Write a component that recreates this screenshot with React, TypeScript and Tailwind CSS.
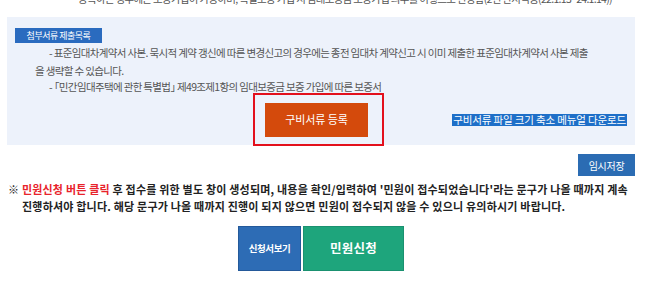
export default function App() {
  return (
    <div className="w-[650px] h-[287px] overflow-hidden bg-white font-['Noto_Sans_CJK_KR','Noto_Sans',sans-serif] text-[#333]">
      {/* cut-off line from the section above */}
      <div className="h-[17px] overflow-hidden">
        <p className="-mt-[7px] pl-[78px] whitespace-nowrap text-[10.5px] leading-[12px] tracking-[-0.7px] text-[#555]">
          등록하는 경우에는 보증가입이 가능하며, 특별보증 가입 시 임대보증금 보증가입 의무를 이행으로 인정함(2년 한시적용(22.1.13~24.1.14))
        </p>
      </div>

      {/* attachment panel */}
      <section className="ml-[7px] w-[628px] h-[128px] bg-[#edf2fb] pt-[11px] pl-[8px] pr-[8px]">
        <div className="w-[87px] h-[15px] bg-[#2a6bbf] text-white text-[9px] leading-[15px] tracking-[-0.5px] text-center">
          첨부서류 제출목록
        </div>
        <ul className="mt-[1px] pl-[27px] text-[10.5px] leading-[17.5px] tracking-[-0.65px] text-[#555]">
          <li className="indent-[7px]">
            - 표준임대차계약서 사본. 묵시적 계약 갱신에 따른 변경신고의 경우에는 종전 임대차 계약신고 시 이미 제출한 표준임대차계약서 사본 제출
            <br />
            <span className="-ml-[7px]">을 생략할 수 있습니다.</span>
          </li>
          <li className="indent-[7px] -mt-[1px]">
            -<span className="-ml-[3px]">「</span>민간임대주택에 관한 특별법<span className="-mr-[5px]">」</span> 제49조제1항의 임대보증금 보증 가입에 따른 보증서
          </li>
        </ul>
        <div className="mt-[7px] flex items-center">
          <button className="relative ml-[250px] w-[103px] h-[34px] bg-[#d44a0c] text-white text-[11px] tracking-[-0.1px]">
            구비서류 등록
            <span className="absolute -left-[12px] -right-[16px] -top-[10px] -bottom-[9px] border-2 border-[#e3101c]" />
          </button>
          <span className="ml-auto bg-[#1e6fc8] text-white text-[10.5px] leading-[12px] tracking-[-0.15px] px-[1px]">
            구비서류 파일 크기 축소 메뉴얼 다운로드
          </span>
        </div>
      </section>

      {/* temp save */}
      <div className="mt-[9px] flex justify-end pr-[15px]">
        <button className="w-[57px] h-[22px] bg-[#2b6cb3] text-white text-[10px] tracking-[-0.3px]">임시저장</button>
      </div>

      {/* notice */}
      <p className="mt-[5px] pl-[22px] pr-[4px] -indent-[14px] text-[11px] leading-[17px] font-bold tracking-[0.2px] text-[#222] whitespace-nowrap">
        ※ <span className="text-[#e8232b]">민원신청 버튼 클릭</span> 후 접수를 위한 별도 창이 생성되며, 내용을 확인/입력하여 '민원이 접수되었습니다'라는 문구가 나올 때까지 계속
        <br />
        진행하셔야 합니다. 해당 문구가 나올 때까지 진행이 되지 않으면 민원이 접수되지 않을 수 있으니 유의하시기 바랍니다.
      </p>

      {/* actions */}
      <div className="mt-[11px] pl-[238px] flex gap-[2px]">
        <button className="w-[63px] h-[45px] bg-[#2d6cb5] border border-[#24599a] text-white text-[9.5px] font-bold tracking-[-0.4px]">
          신청서보기
        </button>
        <button className="w-[101px] h-[45px] bg-[#1ea57c] border border-[#1a9170] text-white text-[12.5px] font-bold tracking-[0.3px]">
          민원신청
        </button>
      </div>
    </div>
  );
}
